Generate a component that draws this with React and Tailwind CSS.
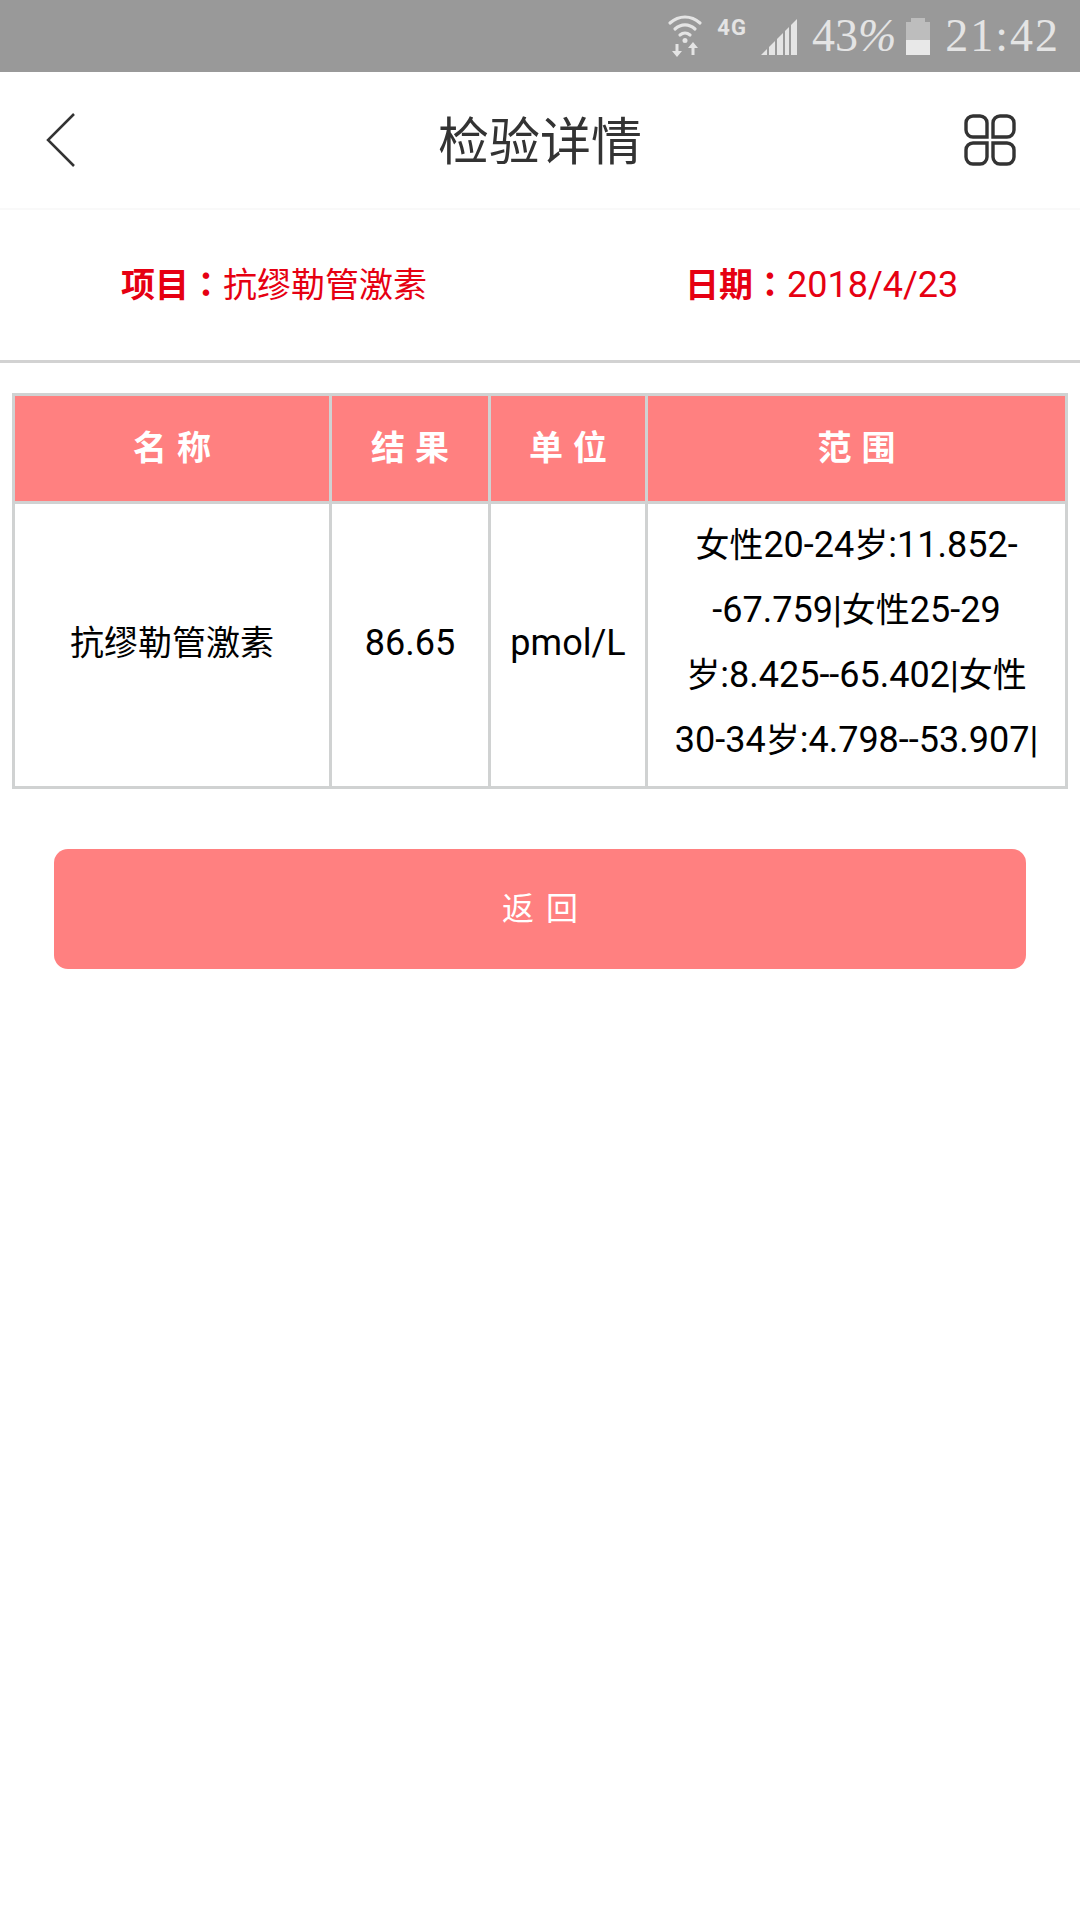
const sans = 'font-["Roboto","Noto_Sans_CJK_SC",sans-serif]'

// CJK runs are a touch smaller than the digits around them
function Cn({ children }) {
  return <span className="text-[34px]">{children}</span>
}

function Colon() {
  return <span className="font-['Noto_Sans_CJK_TC',sans-serif] text-[34px]">：</span>
}

function WifiIcon() {
  return (
    <svg width="36" height="44" viewBox="0 0 36 44" fill="none" stroke="#e4e4e4" strokeLinecap="round">
      <path d="M3 9 C12 1 24 1 33 9" strokeWidth="3.2" />
      <path d="M8 15 C14 9.5 22 9.5 28 15" strokeWidth="3.2" />
      <path d="M13 21 C16 18.5 20 18.5 23 21" strokeWidth="3.2" />
      <path d="M18 26.5 L18 26.6" strokeWidth="5" />
      <path d="M8.5 30 H11.5 V37 H15 L10 43 L5 37 H8.5 Z" fill="#e4e4e4" stroke="none" />
      <path d="M24.5 41 H27.5 V34 H31 L26 28 L21 34 H24.5 Z" fill="#e4e4e4" stroke="none" />
    </svg>
  )
}

function SignalIcon() {
  return (
    <svg width="38" height="37" viewBox="0 0 38 37" fill="#e4e4e4">
      <path d="M0 36 L6 30 V36 Z" />
      <path d="M8 28 L14 22 V36 H8 Z" />
      <path d="M16 20 L22 14 V36 H16 Z" />
      <path d="M24 12 L28 8 V36 H24 Z" />
      <path d="M30 6 L36 0 V36 H30 Z" />
    </svg>
  )
}

function BatteryIcon() {
  return (
    <div className="flex flex-col items-center w-[24px]">
      <div className="w-[14px] h-[4px] bg-[#bdbdbd]" />
      <div className="w-[24px] h-[18px] bg-[#bdbdbd]" />
      <div className="w-[24px] h-[15px] bg-[#e8e8e8]" />
    </div>
  )
}

function StatusBar() {
  return (
    <div className="h-[72px] bg-[#999999] flex items-center justify-end pr-[20px] text-[#e4e4e4] font-['Liberation_Serif',serif]">
      <WifiIcon />
      <span className="ml-[14px] mb-[18px] text-[22px] font-bold font-['Roboto',sans-serif] tracking-[1px]">4G</span>
      <div className="ml-[14px] mt-[3px]">
        <SignalIcon />
      </div>
      <span className="ml-[13px] text-[46px] leading-none">43<span className="italic">%</span></span>
      <div className="ml-[10px]">
        <BatteryIcon />
      </div>
      <span className="ml-[15px] text-[46px] leading-none tracking-[2px]">21:42</span>
    </div>
  )
}

function NavBar() {
  return (
    <div className="h-[138px] bg-white border-b-2 border-[#f9f9f9] flex items-center pl-[45px] pr-[64px]">
      <div className="flex-1">
        <svg width="32" height="56" viewBox="0 0 32 56" fill="none" stroke="#333" strokeWidth="2.5">
          <path d="M29 2 L3 28 L29 54" strokeLinejoin="miter" />
        </svg>
      </div>
      <h1 className="pb-[3px] pl-[19px] text-[51px] leading-none text-[#333] font-['Noto_Sans_CJK_SC',sans-serif] font-normal">检验详情</h1>
      <div className="flex-1 flex justify-end">
        <svg width="52" height="52" viewBox="0 0 52 52" fill="none" stroke="#333" strokeWidth="3.4">
          <path d="M2 9 a7 7 0 0 1 7 -7 h7 a7 7 0 0 1 7 7 v14 h-14 a7 7 0 0 1 -7 -7 z" />
          <path d="M50 9 a7 7 0 0 0 -7 -7 h-7 a7 7 0 0 0 -7 7 v14 h14 a7 7 0 0 0 7 -7 z" />
          <path d="M2 43 a7 7 0 0 0 7 7 h7 a7 7 0 0 0 7 -7 v-14 h-14 a7 7 0 0 0 -7 7 z" />
          <path d="M50 43 a7 7 0 0 1 -7 7 h-7 a7 7 0 0 1 -7 -7 v-14 h14 a7 7 0 0 1 7 7 z" />
        </svg>
      </div>
    </div>
  )
}

function InfoRow() {
  return (
    <div className={`h-[150px] pb-[2px] flex items-center text-[34px] text-[#e60012] ${sans}`}>
      <div className="ml-[121px] w-[564px]">
        <span className="font-bold">项目<Colon /></span>抗缪勒管激素
      </div>
      <div className="text-[36px]">
        <span className="font-bold text-[34px]">日期<Colon /></span>2018/4/23
      </div>
    </div>
  )
}

function DataTable() {
  const th = 'border-[3px] border-[#d0d2d2] font-bold text-[34px] tracking-[10px] pl-[10px] text-white'
  const td = 'border-[3px] border-[#d0d2d2] text-[36px] text-black text-center align-middle p-0 pb-[4px]'
  return (
    <div className="px-[12px] pt-[30px]">
      <table className={`w-[1053px] table-fixed border-collapse ${sans}`}>
        <colgroup>
          <col className="w-[317px]" />
          <col className="w-[159px]" />
          <col className="w-[157px]" />
          <col className="w-[420px]" />
        </colgroup>
        <thead>
          <tr className="h-[108px] bg-[#ff8080]">
            <th className={th}>名称</th>
            <th className={th}>结果</th>
            <th className={th}>单位</th>
            <th className={th}>范围</th>
          </tr>
        </thead>
        <tbody>
          <tr className="h-[285px]">
            <td className={td}><Cn>抗缪勒管激素</Cn></td>
            <td className={td}>86.65</td>
            <td className={td}>pmol/L</td>
            <td className={`${td} leading-[65px]`}>
              <Cn>女性</Cn>20-24<Cn>岁</Cn>:11.852-
              <br />
              -67.759|<Cn>女性</Cn>25-29
              <br />
              <Cn>岁</Cn>:8.425--65.402|<Cn>女性</Cn>
              <br />
              30-34<Cn>岁</Cn>:4.798--53.907|
            </td>
          </tr>
        </tbody>
      </table>
    </div>
  )
}

export default function App() {
  return (
    <div className="w-[1080px] h-[1920px] bg-white overflow-hidden">
      <StatusBar />
      <NavBar />
      <InfoRow />
      <div className="h-[3px] bg-[#d2d2d2]" />
      <DataTable />
      <div className="px-[54px] pt-[60px]">
        <button className={`w-full h-[120px] rounded-[14px] bg-[#ff8080] text-white text-[32px] tracking-[12px] pl-[12px] ${sans}`}>
          返回
        </button>
      </div>
    </div>
  )
}
